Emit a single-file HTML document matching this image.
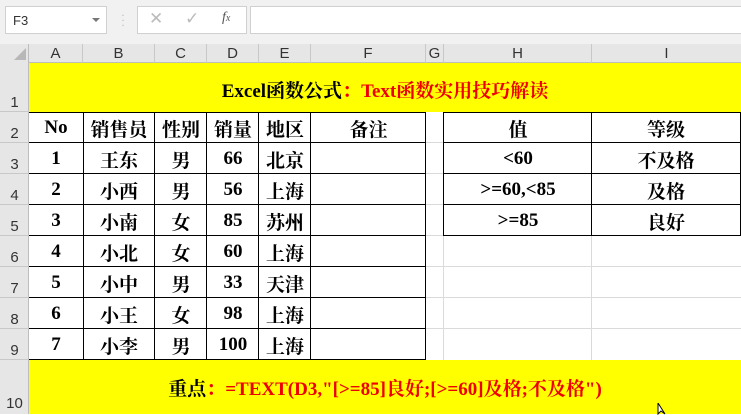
<!DOCTYPE html>
<html><head><meta charset="utf-8"><style>
body{margin:0;width:741px;height:414px;overflow:hidden;background:#fff;position:relative;font-family:"Liberation Serif","Noto Serif CJK SC",serif}
.a{position:absolute;box-sizing:border-box}
.tb{background:#f1f1f1;}
.hd{background:#e6e6e6;color:#333;font-family:"Liberation Sans",sans-serif;font-size:15px;text-align:center}
.c{position:absolute;display:flex;align-items:center;justify-content:center;font-weight:bold;font-size:19px;color:#000;white-space:nowrap}
.gl{position:absolute;background:#dadada}
.bl{position:absolute;background:#000}
</style></head><body>
<div class="a tb" style="left:0;top:0;width:741px;height:44px"></div>
<div class="a" style="left:5px;top:6px;width:102px;height:28px;background:#fff;border:1px solid #d0d0d0;font-family:'Liberation Sans',sans-serif;font-size:13px;color:#333;padding:6px 0 0 7px">F3</div>
<div class="a" style="left:92px;top:18px;width:0;height:0;border-left:4px solid transparent;border-right:4px solid transparent;border-top:4px solid #777"></div>
<div class="a" style="left:121px;top:13px;color:#bbb;font-size:12px;line-height:5px">·<br>·<br>·</div>
<div class="a" style="left:137px;top:6px;width:110px;height:28px;background:#fff;border:1px solid #d0d0d0"></div>
<div class="a" style="left:149px;top:9px;color:#bbb;font-family:'Liberation Sans',sans-serif;font-size:17px">✕</div>
<div class="a" style="left:185px;top:9px;color:#bbb;font-family:'DejaVu Sans',sans-serif;font-size:17px">✓</div>
<div class="a" style="left:222px;top:10px;color:#555;font-style:italic;font-size:14px">f<span style="font-size:10px">x</span></div>
<div class="a" style="left:250px;top:6px;width:491px;height:28px;background:#fff;border:1px solid #d0d0d0;border-right:none"></div>
<div class="a hd" style="left:0;top:44px;width:741px;height:19px;border-bottom:1px solid #bdbdbd"></div>
<div class="a hd" style="left:0;top:44px;width:29px;height:370px;border-right:1px solid #bdbdbd"></div>
<div class="a" style="left:14px;top:48px;width:0;height:0;border-left:12px solid transparent;border-bottom:12px solid #b8b8b8"></div>
<div class="a hd" style="left:29px;top:44px;width:54px;height:19px;line-height:20px;border-right:1px solid #c8c8c8;background:none">A</div>
<div class="a hd" style="left:83px;top:44px;width:72px;height:19px;line-height:20px;border-right:1px solid #c8c8c8;background:none">B</div>
<div class="a hd" style="left:155px;top:44px;width:52px;height:19px;line-height:20px;border-right:1px solid #c8c8c8;background:none">C</div>
<div class="a hd" style="left:207px;top:44px;width:52px;height:19px;line-height:20px;border-right:1px solid #c8c8c8;background:none">D</div>
<div class="a hd" style="left:259px;top:44px;width:52px;height:19px;line-height:20px;border-right:1px solid #c8c8c8;background:none">E</div>
<div class="a hd" style="left:311px;top:44px;width:115px;height:19px;line-height:20px;border-right:1px solid #c8c8c8;background:none">F</div>
<div class="a hd" style="left:426px;top:44px;width:18px;height:19px;line-height:20px;border-right:1px solid #c8c8c8;background:none">G</div>
<div class="a hd" style="left:444px;top:44px;width:148px;height:19px;line-height:20px;border-right:1px solid #c8c8c8;background:none">H</div>
<div class="a hd" style="left:592px;top:44px;width:149px;height:19px;line-height:20px;background:none">I</div>
<div class="a hd" style="left:0;top:63px;width:29px;height:49px;border-bottom:1px solid #c8c8c8;background:none;padding-top:31px">1</div>
<div class="a hd" style="left:0;top:112px;width:29px;height:31px;border-bottom:1px solid #c8c8c8;background:none;padding-top:13px">2</div>
<div class="a hd" style="left:0;top:143px;width:29px;height:31px;border-bottom:1px solid #c8c8c8;background:none;padding-top:13px">3</div>
<div class="a hd" style="left:0;top:174px;width:29px;height:31px;border-bottom:1px solid #c8c8c8;background:none;padding-top:13px">4</div>
<div class="a hd" style="left:0;top:205px;width:29px;height:31px;border-bottom:1px solid #c8c8c8;background:none;padding-top:13px">5</div>
<div class="a hd" style="left:0;top:236px;width:29px;height:31px;border-bottom:1px solid #c8c8c8;background:none;padding-top:13px">6</div>
<div class="a hd" style="left:0;top:267px;width:29px;height:31px;border-bottom:1px solid #c8c8c8;background:none;padding-top:13px">7</div>
<div class="a hd" style="left:0;top:298px;width:29px;height:31px;border-bottom:1px solid #c8c8c8;background:none;padding-top:13px">8</div>
<div class="a hd" style="left:0;top:329px;width:29px;height:31px;border-bottom:1px solid #c8c8c8;background:none;padding-top:13px">9</div>
<div class="a hd" style="left:0;top:360px;width:29px;height:54px;background:none;padding-top:35px">10</div>
<div class="gl" style="left:425px;top:112px;width:1px;height:248px"></div>
<div class="gl" style="left:443px;top:112px;width:1px;height:248px"></div>
<div class="gl" style="left:591px;top:236px;width:1px;height:124px"></div>
<div class="gl" style="left:426px;top:142px;width:17px;height:1px"></div>
<div class="gl" style="left:426px;top:173px;width:17px;height:1px"></div>
<div class="gl" style="left:426px;top:204px;width:17px;height:1px"></div>
<div class="gl" style="left:426px;top:266px;width:315px;height:1px"></div>
<div class="gl" style="left:426px;top:297px;width:315px;height:1px"></div>
<div class="gl" style="left:426px;top:328px;width:315px;height:1px"></div>
<div class="gl" style="left:426px;top:235px;width:17px;height:1px"></div>
<div class="a" style="left:29px;top:63px;width:712px;height:49px;background:#ffff00"></div>
<div class="a" style="left:29px;top:360px;width:712px;height:54px;background:#ffff00"></div>
<div class="c" style="left:29px;top:66px;width:712px;height:46px;font-size:19px">Excel函数公式<span style="color:#e00">：Text函数实用技巧解读</span></div>
<div class="c" style="left:29px;top:362px;width:712px;height:50px;font-size:19px">重点<span style="color:#e00">：=TEXT(D3,"[&gt;=85]良好;[&gt;=60]及格;不及格")</span></div>
<div class="bl" style="left:29px;top:112px;width:397px;height:1px"></div>
<div class="bl" style="left:29px;top:142px;width:397px;height:1px"></div>
<div class="bl" style="left:29px;top:173px;width:397px;height:1px"></div>
<div class="bl" style="left:29px;top:204px;width:397px;height:1px"></div>
<div class="bl" style="left:29px;top:235px;width:397px;height:1px"></div>
<div class="bl" style="left:29px;top:266px;width:397px;height:1px"></div>
<div class="bl" style="left:29px;top:297px;width:397px;height:1px"></div>
<div class="bl" style="left:29px;top:328px;width:397px;height:1px"></div>
<div class="bl" style="left:29px;top:359px;width:397px;height:1px"></div>
<div class="bl" style="left:83px;top:112px;width:1px;height:248px"></div>
<div class="bl" style="left:154px;top:112px;width:1px;height:248px"></div>
<div class="bl" style="left:206px;top:112px;width:1px;height:248px"></div>
<div class="bl" style="left:258px;top:112px;width:1px;height:248px"></div>
<div class="bl" style="left:310px;top:112px;width:1px;height:248px"></div>
<div class="bl" style="left:425px;top:112px;width:1px;height:248px"></div>
<div class="bl" style="left:443px;top:112px;width:298px;height:1px"></div>
<div class="bl" style="left:443px;top:142px;width:298px;height:1px"></div>
<div class="bl" style="left:443px;top:173px;width:298px;height:1px"></div>
<div class="bl" style="left:443px;top:204px;width:298px;height:1px"></div>
<div class="bl" style="left:443px;top:235px;width:298px;height:1px"></div>
<div class="bl" style="left:443px;top:112px;width:1px;height:124px"></div>
<div class="bl" style="left:591px;top:112px;width:1px;height:124px"></div>
<div class="bl" style="left:740px;top:112px;width:1px;height:124px"></div>
<div id="t"></div>
<script>
var cols=[[29,54],[83,72],[155,52],[207,52],[259,52],[311,115]];
var rows=[["No","销售员","性别","销量","地区","备注"],["1","王东","男","66","北京",""],["2","小西","男","56","上海",""],["3","小南","女","85","苏州",""],["4","小北","女","60","上海",""],["5","小中","男","33","天津",""],["6","小王","女","98","上海",""],["7","小李","男","100","上海",""]];
var h="";
rows.forEach(function(r,i){r.forEach(function(v,j){h+='<div class="c" style="left:'+cols[j][0]+'px;top:'+(113+i*31)+'px;width:'+cols[j][1]+'px;height:30px">'+v+'</div>';});});
var rr=[["值","等级"],["&lt;60","不及格"],["&gt;=60,&lt;85","及格"],["&gt;=85","良好"]];
rr.forEach(function(r,i){h+='<div class="c" style="left:444px;top:'+(113+i*31)+'px;width:148px;height:30px">'+r[0]+'</div><div class="c" style="left:592px;top:'+(113+i*31)+'px;width:148px;height:30px">'+r[1]+'</div>';});
document.getElementById("t").innerHTML=h;
</script>
<svg class="a" style="left:657px;top:403px" width="12" height="12"><path d="M1 0 L1 11 L4 8 L8 11 Z" fill="#fff" stroke="#000" stroke-width="1"/></svg>
</body></html>
